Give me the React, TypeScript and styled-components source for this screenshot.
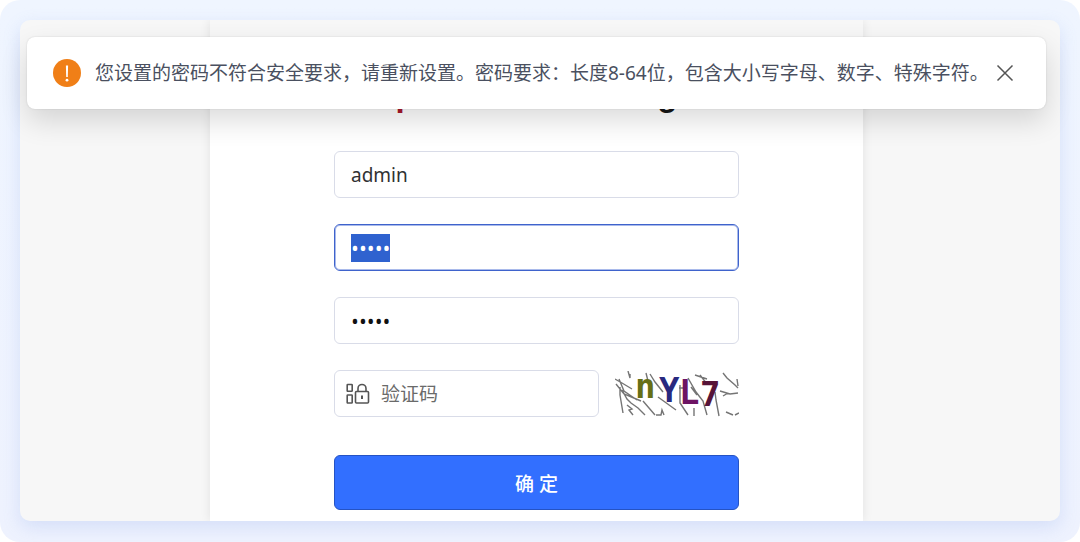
import React, { useEffect, useRef } from 'react';
import styled, { createGlobalStyle, css } from 'styled-components';

const GlobalStyle = createGlobalStyle`
  * { box-sizing: border-box; }
  body {
    margin: 0;
    background: #ffffff;
    font-family: 'Noto Sans', 'Noto Sans CJK SC', sans-serif;
    font-size: 19px;
    color: #303133;
  }
`;

const Frame = styled.div`
  min-height: 100vh;
  padding: 20px 20px 21px;
  display: flex;
  border-radius: 20px;
  background: linear-gradient(#eff5ff, #eef2fe);
`;

const Screen = styled.main`
  position: relative;
  flex: 1;
  display: flex;
  justify-content: center;
  padding-right: 7px;
  border-radius: 10px;
  background: #f7f7f7;
  box-shadow: 0 6px 18px rgba(110, 145, 225, 0.2);
`;

const Card = styled.section`
  width: 653px;
  max-width: 100%;
  display: flex;
  flex-direction: column;
  align-items: center;
  padding: 55px 16px 11px;
  background: linear-gradient(#f7f7f7 40px, #ffffff 40px);
  box-shadow: 0 0 10px rgba(0, 0, 0, 0.09);
  clip-path: inset(0 -12px);
`;

const Title = styled.h1`
  width: 282px;
  margin: 0 0 36px;
  display: flex;
  justify-content: space-between;
  font: 700 33px/40px 'Liberation Sans', sans-serif;
  color: #161616;
`;

const TitleAccent = styled.span`
  color: #a8182c;
`;

const Form = styled.form`
  width: 405px;
  max-width: 100%;
  display: flex;
  flex-direction: column;
  gap: 26px;
`;

const fieldFrame = css`
  height: 47px;
  border: 1px solid #d9dce8;
  border-radius: 6px;
  background: #ffffff;
`;

const Field = styled.input<{ $secret?: boolean }>`
  ${fieldFrame}
  width: 100%;
  padding: 0 16px;
  font: inherit;
  color: inherit;
  outline: none;
  ${({ $secret }) =>
    $secret &&
    css`
      font-family: 'Open Sans', sans-serif;
      font-size: 21px;
      line-height: 24px;
      color: #111111;
    `}
  &:focus {
    border-color: #3f63cc;
    box-shadow: inset 0 0 0 1px #a9baeb;
    caret-color: transparent;
  }
  &::selection {
    background: #2f62cf;
    color: #ffffff;
  }
`;

const CodeRow = styled.div`
  display: flex;
  align-items: center;
  gap: 16px;
`;

const CodeField = styled.label`
  ${fieldFrame}
  flex: 1;
  min-width: 0;
  display: flex;
  align-items: center;
  gap: 11px;
  padding: 0 11px;
`;

const CodeInput = styled.input`
  flex: 1;
  min-width: 0;
  padding: 0;
  border: 0;
  outline: none;
  background: none;
  font: inherit;
  color: inherit;
  &::placeholder {
    color: #6a6a6a;
    opacity: 1;
  }
`;

const Submit = styled.button`
  height: 55px;
  margin-top: 12px;
  border: 1px solid #2553c4;
  border-radius: 6px;
  background: #326fff;
  color: #ffffff;
  font: inherit;
  font-weight: 500;
`;

const Toast = styled.div`
  position: absolute;
  top: 17px;
  left: 7px;
  right: 14px;
  min-height: 72px;
  display: flex;
  align-items: center;
  gap: 14px;
  padding: 0 32px 0 26px;
  border-radius: 8px;
  background: #ffffff;
  box-shadow: 0 12px 28px rgba(0, 0, 0, 0.14), 0 0 2px rgba(0, 0, 0, 0.14);

  svg {
    flex: none;
  }
`;

const Message = styled.p`
  flex: 1;
  min-width: 0;
  margin: 0;
  line-height: 28px;
  white-space: nowrap;
  color: #4a5060;
`;

const Close = styled.button`
  display: flex;
  padding: 0;
  border: 0;
  background: none;
  color: #555555;
`;

const WarningIcon = () => (
  <svg width="28" height="28" viewBox="0 0 28 28" aria-hidden="true">
    <circle cx="14" cy="14" r="14" fill="#f07f17" />
    <path d="M12.9 6.5h2.2l-.3 11.5h-1.6z" fill="#fff" />
    <circle cx="14" cy="21.2" r="1.4" fill="#fff" />
  </svg>
);

const CloseIcon = () => (
  <svg width="18" height="18" viewBox="0 0 18 18" fill="none" stroke="currentColor" strokeWidth="1.5" aria-hidden="true">
    <path d="M1.5 1.5l15 15M16.5 1.5l-15 15" />
  </svg>
);

const CodeIcon = () => (
  <svg width="24" height="22" viewBox="0 0 24 22" fill="none" stroke="#555" strokeWidth="1.6" aria-hidden="true">
    <rect x="1.2" y="1.5" width="5" height="6.8" rx="0.6" />
    <rect x="1.2" y="12" width="5" height="8" rx="0.6" />
    <rect x="9.5" y="8.5" width="13" height="11.5" rx="1" />
    <path d="M12 8.5V5.5a4 4 0 0 1 8 0v3" />
    <path d="M16 12.5v3.5" strokeWidth="2" />
  </svg>
);

const Captcha = () => (
  <svg width="124" height="46" viewBox="0 0 124 46" role="img" aria-label="验证码">
    <path
      fill="none"
      stroke="#757575"
      strokeWidth="1.4"
      d="M0 8l7 4 10 6M1 13l8 10 17 7M4 8l5 12 13 9M5 16l0 8 3 18M7 19l5 9 4 4 7 5 7 7M12 34l5 4-3 1 4 5M13 0l2 7 0-4M31 2l3 12M35 3l5 8 8 10M43 26l18 13M28 30l12 14M41 44h5l1-5 2 5M65 14v18l8 12M64 17h5M73 7l8 14 7 9 4 14M76 16l6 8M79 37v8M80 4l12 4M85 4l7 9M100 21l1 8 3 16M108 2l4 5 8 7 3 3M122 8l1 7M105 20l10 3 8-1M108 25l5-3M111 41l7 3M120 44l4-2"
    />
    <g fontFamily="'DejaVu Sans Mono', monospace" fontWeight="700" fontSize="34">
      <text x="20" y="27" fill="#666f16">n</text>
      <text x="44" y="31" fill="#28297f">Y</text>
      <text x="64" y="33" fill="#6d1463">L</text>
      <text x="85" y="35" fill="#561438">7</text>
    </g>
  </svg>
);

export default function App() {
  const password = useRef<HTMLInputElement>(null);

  useEffect(() => {
    password.current?.focus();
    password.current?.select();
  }, []);

  return (
    <>
      <GlobalStyle />
      <Frame>
        <Screen>
          <Card>
            <Title>
              <TitleAccent>p</TitleAccent>
              <span>g</span>
            </Title>
            <Form onSubmit={(e) => e.preventDefault()}>
              <Field type="text" aria-label="用户名" defaultValue="admin" />
              <Field $secret ref={password} type="password" aria-label="密码" defaultValue="admin" />
              <Field $secret type="password" aria-label="确认密码" defaultValue="admin" />
              <CodeRow>
                <CodeField>
                  <CodeIcon />
                  <CodeInput type="text" aria-label="验证码" placeholder="验证码" />
                </CodeField>
                <Captcha />
              </CodeRow>
              <Submit type="submit">确 定</Submit>
            </Form>
          </Card>
          <Toast role="alert">
            <WarningIcon />
            <Message>
              您设置的密码不符合安全要求，请重新设置。密码要求：长度8-64位，包含大小写字母、数字、特殊字符。
            </Message>
            <Close type="button" aria-label="关闭">
              <CloseIcon />
            </Close>
          </Toast>
        </Screen>
      </Frame>
    </>
  );
}
